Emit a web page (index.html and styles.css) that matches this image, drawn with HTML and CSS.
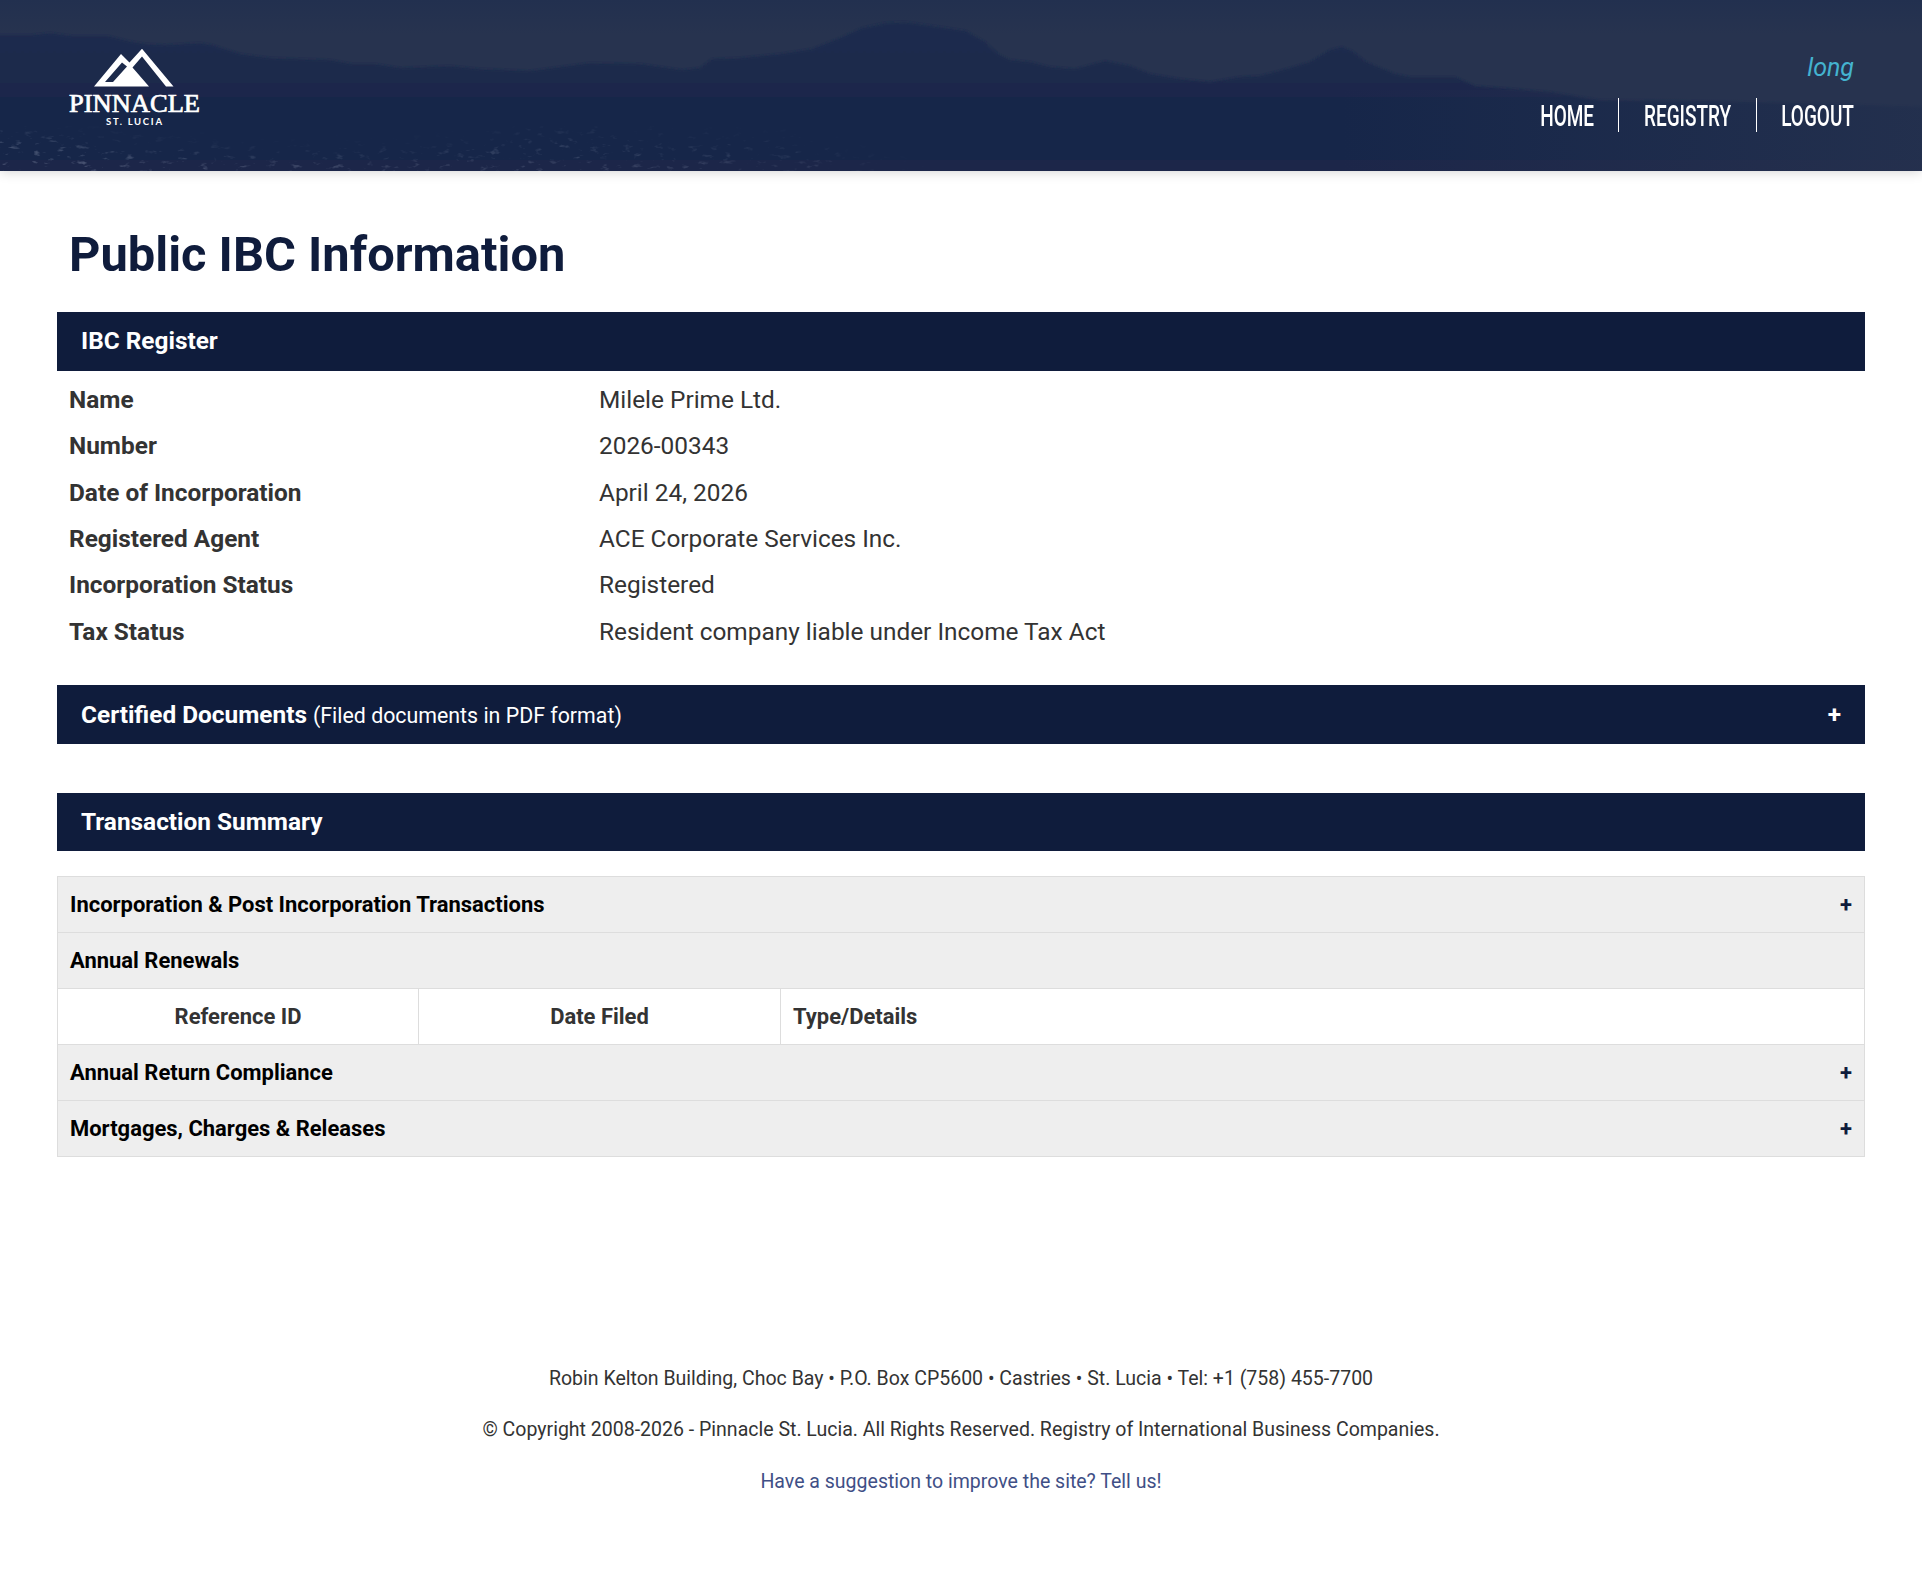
FILE: index.html
```
<!DOCTYPE html>
<html lang="en">

<head>
    <meta charset="UTF-8">
    <meta name="viewport" content="width=device-width, initial-scale=1.0">
    <title>Public IBC Information</title>
    <link rel="stylesheet" href="styles.css">
</head>

<body>
    <header class="header">
        <!-- mountain backdrop -->
        <svg class="backdrop" viewBox="0 0 1922 171" preserveAspectRatio="none">
            <defs>
                <linearGradient id="sky" x1="0" y1="0" x2="0" y2="1">
                    <stop offset="0" stop-color="#22304f" />
                    <stop offset="0.2" stop-color="#27334f" />
                    <stop offset="1" stop-color="#27334f" />
                </linearGradient>
                <linearGradient id="land" x1="0" y1="0" x2="0" y2="1">
                    <stop offset="0" stop-color="#1f2d4e" />
                    <stop offset="0.45" stop-color="#1a284b" />
                    <stop offset="0.7" stop-color="#182548" />
                    <stop offset="1" stop-color="#1b2949" />
                </linearGradient>
                <linearGradient id="haze" x1="0" y1="0" x2="1" y2="0">
                    <stop offset="0" stop-color="#27334f" stop-opacity="0" />
                    <stop offset="1" stop-color="#27334f" stop-opacity="0.75" />
                </linearGradient>
                <filter id="soft"><feGaussianBlur stdDeviation="0.8" /></filter>
                <filter id="blur"><feGaussianBlur stdDeviation="12" /></filter>
                <filter id="speckle" x="0" y="0" width="1" height="1">
                    <feTurbulence type="fractalNoise" baseFrequency="0.09 0.2" numOctaves="3" seed="4" />
                    <feColorMatrix values="0 0 0 0 0.4  0 0 0 0 0.45  0 0 0 0 0.58  5 0 0 0 -3.1" />
                    <feGaussianBlur stdDeviation="0.6" />
                </filter>
                <linearGradient id="fade" x1="0" y1="0" x2="1" y2="0">
                    <stop offset="0" stop-color="#fff" />
                    <stop offset="1" stop-color="#444" />
                </linearGradient>
                <mask id="town"><path d="M-40 132L90 145L240 158L420 155L550 135L800 145L960 190H-40z" fill="url(#fade)" filter="url(#blur)" /></mask>
            </defs>
            <rect width="1922" height="171" fill="url(#sky)" />
            <path filter="url(#soft)" fill="url(#land)" d="M-5 35L32 35L50 33L72 36L108 36L128 41L145 44L165 45L200 43L212 45L240 54L270 58L330 60L352 64L375 64L400 68L450 66L480 69L530 71L560 67L590 63L640 64L682 70L700 68L712 59L740 58L780 54L812 49L840 38L862 28L885 23L905 22L940 27L966 31L985 42L998 54L1010 60L1030 62L1050 67L1075 69L1105 61L1130 66L1150 74L1180 79L1210 82L1240 77L1260 76L1290 68L1310 62L1330 50L1342 47L1352 51L1366 62L1395 74L1410 77L1455 77L1475 86L1550 92L1600 100L1700 101L1800 103L1930 107V180H-5z" />
            <rect x="1340" y="90" width="582" height="81" fill="url(#haze)" />
            <rect y="110" width="960" height="61" filter="url(#speckle)" mask="url(#town)" opacity="0.35" />
        </svg>

        <a class="logo" href="#">
            <svg width="134" height="80" viewBox="0 0 134 80">
                <path fill="#fff" fill-rule="evenodd" d="M26 38.500L53 6L61.500 14.500L74 0.800L105.500 38.500H98L74 8.500L64.500 19.500L81 38.500zM37 34L54 14.500L59 18.500L45 34z" />
                <text class="logo-name" x="1" y="63.500" textLength="131" lengthAdjust="spacingAndGlyphs">PINNACLE</text>
                <text class="logo-place" x="38" y="76.500" textLength="56">ST. LUCIA</text>
            </svg>
        </a>

        <div class="header-right">
            <div class="user">long</div>
            <nav class="nav">
                <a class="nav-home" href="#"><span>HOME</span></a>
                <a class="nav-registry" href="#"><span>REGISTRY</span></a>
                <a class="nav-logout" href="#"><span>LOGOUT</span></a>
            </nav>
        </div>
    </header>

    <main class="container">
        <h1 class="heading">Public IBC Information</h1>

        <h2 class="bar">IBC Register</h2>
        <dl class="details">
            <dt>Name</dt>
            <dd>Milele Prime Ltd.</dd>
            <dt>Number</dt>
            <dd>2026-00343</dd>
            <dt>Date of Incorporation</dt>
            <dd>April 24, 2026</dd>
            <dt>Registered Agent</dt>
            <dd>ACE Corporate Services Inc.</dd>
            <dt>Incorporation Status</dt>
            <dd>Registered</dd>
            <dt>Tax Status</dt>
            <dd>Resident company liable under Income Tax Act</dd>
        </dl>

        <h2 class="bar documents"><span>Certified Documents <small>(Filed documents in PDF format)</small></span><span>+</span></h2>

        <h2 class="bar summary">Transaction Summary</h2>

        <div class="transactions">
            <div class="group">Incorporation &amp; Post Incorporation Transactions<span>+</span></div>
            <div class="group">Annual Renewals</div>
            <div class="columns">
                <div class="col">Reference ID</div>
                <div class="col">Date Filed</div>
                <div class="col col-type">Type/Details</div>
            </div>
            <div class="group">Annual Return Compliance<span>+</span></div>
            <div class="group">Mortgages, Charges &amp; Releases<span>+</span></div>
        </div>
    </main>

    <footer class="footer">
        <p>Robin Kelton Building, Choc Bay • P.O. Box CP5600 • Castries • St. Lucia • Tel: +1 (758) 455-7700</p>
        <p>© Copyright 2008-2026 - Pinnacle St. Lucia. All Rights Reserved. Registry of International Business Companies.</p>
        <p><a href="#">Have a suggestion to improve the site? Tell us!</a></p>
    </footer>
</body>

</html>
```
FILE: styles.css
```
* {
    box-sizing: border-box;
}

body {
    margin: 0;
    padding: 0;
    background-color: #fff;
    color: #333;
    font-family: Roboto, sans-serif;
    font-size: 24.4px;
}

a {
    text-decoration: none;
}

.header {
    position: relative;
    display: flex;
    justify-content: space-between;
    height: 171px;
    padding: 48px 68px 0;
    box-shadow: 0 0 12px rgba(0, 0, 0, 0.2);
}

.backdrop {
    position: absolute;
    top: 0;
    left: 0;
    width: 100%;
    height: 100%;
}

.logo,
.header-right {
    position: relative;
}

.logo-name {
    fill: #fff;
    stroke: #fff;
    stroke-width: 0.7px;
    font: 25px "Liberation Serif", serif;
}

.logo-place {
    fill: #fff;
    font: bold 9.5px Lato, sans-serif;
}

.header-right {
    display: flex;
    flex-direction: column;
    align-items: flex-end;
}

.user {
    color: #44b3cf;
    font-size: 25px;
    font-style: italic;
    line-height: 40px;
}

.nav {
    display: flex;
    margin-top: 10px;
}

.nav a {
    display: flex;
    justify-content: center;
    box-sizing: content-box;
    height: 34px;
    padding: 0 24px;
    border-right: 1px solid #fff;
    color: #fff;
    font-size: 29px;
    font-weight: 500;
    line-height: 36px;
}

.nav a:last-child {
    padding-right: 0;
    border-right: 0;
}

/* condensed caps */
.nav span {
    transform: scaleX(0.655);
}

.nav-home {
    width: 54px;
}

.nav-registry {
    width: 89px;
}

.nav-logout {
    width: 73px;
}

.container {
    padding: 0 57px;
}

.heading {
    margin: 55px 12px 28px;
    color: #0f1c3c;
    font-size: 2em;
    line-height: 58px;
}

.bar {
    display: flex;
    justify-content: space-between;
    height: 59px;
    margin: 0;
    padding: 0 24px;
    background-color: #0f1c3c;
    color: #fff;
    font-size: 1em;
    line-height: 58px;
}

.bar small {
    font-size: 0.875em;
    font-weight: 400;
}

.documents {
    line-height: 59px;
}

.details {
    display: grid;
    grid-template-columns: 530px 1fr;
    grid-auto-rows: 46.36px;
    margin: 6px 0 29.800px;
    padding: 0 12px;
    line-height: 46.36px;
}

.details dt {
    font-weight: 700;
}

.details dd {
    margin: 0;
}

.summary {
    height: 58px;
    margin: 49px 0 25px;
}

.transactions {
    border: 1px solid #ddd;
    border-top: 0;
    font-size: 0.9em;
    font-weight: 700;
    line-height: 55px;
}

.group {
    display: flex;
    justify-content: space-between;
    height: 56px;
    padding: 0 12px;
    border-top: 1px solid #ddd;
    background-color: #eee;
    color: #000;
}

.group span {
    color: #0f1c3c;
}

.columns {
    display: grid;
    grid-template-columns: 361px 362px 1fr;
    height: 56px;
    border-top: 1px solid #ddd;
}

.col {
    border-right: 1px solid #ddd;
    text-align: center;
}

.col-type {
    padding-left: 12px;
    border-right: 0;
    text-align: left;
}

.footer {
    margin-top: 208px;
    font-size: 0.8em;
    line-height: 28px;
    text-align: center;
}

.footer p {
    margin: 0 0 23.500px;
}

.footer a {
    color: #3f4f86;
}
```
